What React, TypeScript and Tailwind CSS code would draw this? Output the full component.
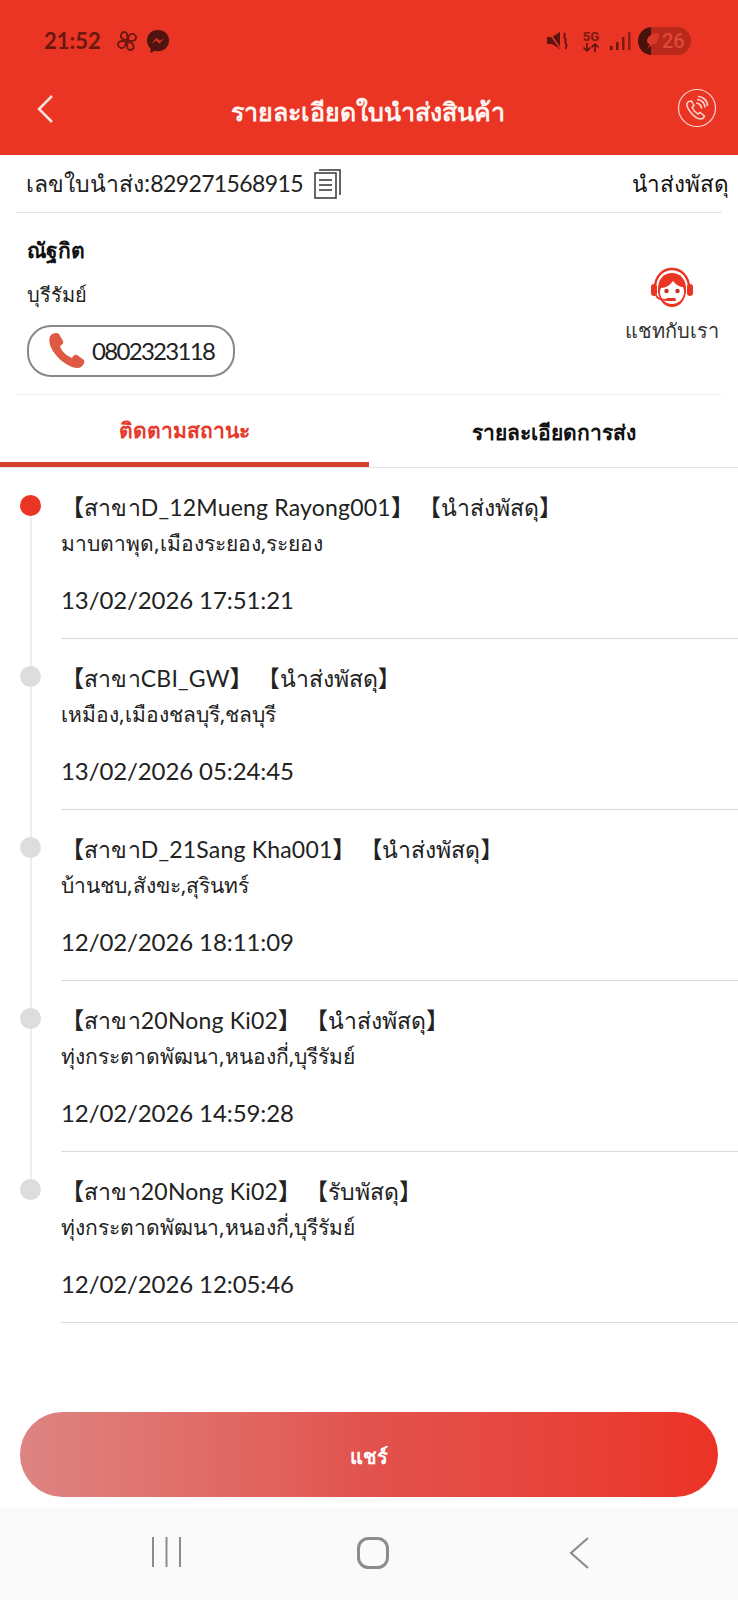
import React from "react";

const font = { fontFamily: '"Noto Sans", "DejaVu Sans", "Noto Sans CJK SC", sans-serif' };

type Item = { title: string; status: string; addr: string; time: string; active?: boolean };
const items: Item[] = [
  { title: "สาขาD_12Mueng Rayong001", status: "นำส่งพัสดุ", addr: "มาบตาพุด,เมืองระยอง,ระยอง", time: "13/02/2026 17:51:21", active: true },
  { title: "สาขาCBI_GW", status: "นำส่งพัสดุ", addr: "เหมือง,เมืองชลบุรี,ชลบุรี", time: "13/02/2026 05:24:45" },
  { title: "สาขาD_21Sang Kha001", status: "นำส่งพัสดุ", addr: "บ้านชบ,สังขะ,สุรินทร์", time: "12/02/2026 18:11:09" },
  { title: "สาขา20Nong Ki02", status: "นำส่งพัสดุ", addr: "ทุ่งกระตาดพัฒนา,หนองกี่,บุรีรัมย์", time: "12/02/2026 14:59:28" },
  { title: "สาขา20Nong Ki02", status: "รับพัสดุ", addr: "ทุ่งกระตาดพัฒนา,หนองกี่,บุรีรัมย์", time: "12/02/2026 12:05:46" },
];

function StatusBar() {
  return (
    <div className="flex h-[56px] items-end justify-between pl-[44px] pr-[47px] pb-[1px] text-[#6a1810]">
      <div className="flex items-center">
        <span className="text-[22px] font-bold leading-[28px] font-['Lato']">21:52</span>
        <svg width="26" height="26" viewBox="0 0 26 26" fill="none" stroke="currentColor" strokeWidth="1.800" className="ml-[13px]">
          <path d="M13 12C9 12 6 10 7 6.500C8 3.500 12 3 13 6C14 8 13.500 10 13 12Z" />
          <path d="M14 12C14 8 16 5 19.500 6C22.500 7 23 11 20 12.500C18 13.500 16 13 14 12Z" />
          <path d="M13.500 14C17.500 14 20 16 19.500 19.500C19 22.500 14.500 23 13.500 20C13 18 13 16 13.500 14Z" />
          <path d="M12 13.500C12 17.500 10 20.500 6.500 20C3.500 19 3 15 6 13.500C8 12.500 10 13 12 13.500Z" />
        </svg>
        <svg width="24" height="25" viewBox="0 0 24 25" className="ml-[6px]">
          <path d="M12 1C5.500 1 1 5.500 1 11.500c0 3.300 1.400 6 3.600 8V24l4-2.200c1 .3 2.200.4 3.400.4 6.500 0 11-4.700 11-10.700S18.500 1 12 1z" fill="#4f140d" />
          <path d="M5.500 14.500l5-5.500 3.300 3 4.700-3-5 5.500-3.300-3z" fill="#ea3424" />
        </svg>
      </div>
      <div className="flex items-center">
        <svg width="22" height="20" viewBox="0 0 22 20" className="mr-[12px]">
          <path d="M0 6h5l8-5v17l-8-5H0z" fill="#5c150e" />
          <path d="M1 0l12 17" stroke="#ea3424" strokeWidth="1.500" />
          <path d="M17 2c2.500 2-1.500 3 1 5.500s-1.500 3 1 5.500-1.500 2.500 0 5" fill="none" stroke="#5c150e" strokeWidth="1.800" />
        </svg>
        <div className="mr-[9px] flex w-[20px] flex-col items-center leading-none">
          <span className="text-[13px] font-bold leading-[13px] text-[#7a1b12] font-['Roboto']">5G</span>
          <svg width="18" height="9" viewBox="0 0 18 9" fill="none" stroke="#5c150e" strokeWidth="1.600">
            <path d="M5 0v8M1.500 4.500L5 8l3.500-3.500M13 9V1M9.500 4.500L13 1l3.500 3.500" />
          </svg>
        </div>
        <svg width="21" height="20" viewBox="0 0 21 20" className="mr-[7px]">
          <rect x="0" y="15" width="2.500" height="4" fill="#5c150e" />
          <rect x="6" y="11" width="2.500" height="8" fill="#6a1810" />
          <rect x="12" y="6" width="2.500" height="13" fill="#7a1b12" />
          <rect x="18" y="1" width="2.500" height="18" fill="#8a2015" />
        </svg>
        <div className="flex h-[28px] w-[53px] overflow-hidden rounded-full bg-[#b8281b]">
          <div className="h-full w-[13px] rounded-l-full bg-[#4a120c]" />
          <svg width="17" height="20" viewBox="0 0 17 20" fill="#d8392b" className="-ml-[7px] mt-[4px] shrink-0">
            <path d="M15 2C9 2 3 5 3 10c0 2 1 3 3 3l-3 5c3-3 5-4 6-5 4 0 6-5 6-11z" />
          </svg>
          <span className="pl-[1px] text-[20px] font-medium leading-[28px] text-[#e0493a] font-['Roboto']">26</span>
        </div>
      </div>
    </div>
  );
}

function Header() {
  return (
    <div className="flex flex-1 items-start justify-between pl-[36px] pr-[21px] pt-[32px]">
      <svg width="18" height="28" viewBox="0 0 18 28" fill="none" stroke="#fbe3df" strokeWidth="2.500" className="mt-[7px]">
        <path d="M16 1L3 14l13 13" />
      </svg>
      <span className="mt-[5px] ml-[4px] text-[25px] font-bold leading-[36px] text-[#fff6f3]">รายละเอียดใบนำส่งสินค้า</span>
      <svg width="40" height="40" viewBox="0 0 40 40" fill="none" stroke="#fbd5cd" strokeWidth="1.200">
        <circle cx="20" cy="20" r="18.500" />
        <path d="M10.500 14.500c-1.500 2-.5 5 2.500 9s7 7.500 10.500 7.500c2 0 3.500-1.500 4-3l-4.500-3.500-2 1.500c-2-1-4.500-3.500-6-6.500l2-2-2.500-4.500c-2 0-3.300.5-4 1.500z" strokeWidth="1.500" />
        <path d="M19 15c3 0 5.500 2.500 5.500 5.500M20 11.500c4.500 0 8 3.500 8 8M21 8.500c5 0 9.500 4 9.500 9.500" strokeWidth="1.700" />
      </svg>
    </div>
  );
}

function TimelineRow({ item, first, last }: { item: Item; first: boolean; last: boolean }) {
  return (
    <div className="flex h-[171px]">
      <div className="flex w-[61px] shrink-0 flex-col pl-[20px]">
        <div className={`ml-[10px] h-[27px] w-[2px] ${first ? "bg-transparent" : "bg-[#eeeeee]"}`} />
        <div className={`h-[21px] w-[21px] rounded-full ${item.active ? "bg-[#ea3424]" : "bg-[#dddddd]"}`} />
        <div className={`ml-[10px] w-[2px] flex-1 ${last ? "bg-transparent" : "bg-[#eeeeee]"}`} />
      </div>
      <div className="flex-1 border-b border-[#d9d9d9] pt-[21px]">
        <div className="flex h-[36px] items-center whitespace-pre text-[23px] text-[#222222]">
          <span className="font-bold">{"【"}</span>
          <span className="font-['Lato'] tracking-[0.2px]">{item.title}</span>
          <span className="font-bold">{"】"}</span>
          <span className="ml-[4px] font-medium">{"【"}{item.status}{"】"}</span>
        </div>
        <div className="h-[36px] text-[21px] leading-[36px] text-[#222222]">{item.addr}</div>
        <div className="mt-[21px] text-[24px] leading-[36px] text-[#222222] font-['Lato'] tracking-[-0.1px]">{item.time}</div>
      </div>
    </div>
  );
}

export default function App() {
  return (
    <div className="flex h-[1600px] w-[738px] flex-col overflow-hidden bg-white" style={font}>
      <div className="flex h-[155px] flex-col bg-[#ea3424]">
        <StatusBar />
        <Header />
      </div>

      <div className="mx-[16px] flex h-[58px] items-center justify-between border-b border-[#e5e5e5] pl-[10px]">
        <div className="flex items-center gap-[11px]">
          <span className="text-[23px] text-[#222222]">
            เลขใบนำส่ง:<span className="font-['Lato'] tracking-[-0.6px]">829271568915</span>
          </span>
          <svg width="27" height="30" viewBox="0 0 27 30" fill="none" stroke="#333" strokeWidth="1.500">
            <rect x="1" y="4" width="21" height="25" />
            <path d="M5 1h21v25M5 11h13M5 16h13M5 21h13" />
          </svg>
        </div>
        <span className="-mr-[7px] text-[22.500px] font-medium text-[#111111]">นำส่งพัสดุ</span>
      </div>

      <div className="mx-[16px] flex h-[182px] justify-between border-b border-[#efefef] pl-[11px]">
        <div className="flex flex-col">
          <span className="mt-[21px] text-[21px] font-semibold leading-[32px] text-[#111111]">ณัฐกิต</span>
          <span className="mt-[13px] text-[20px] font-medium leading-[32px] text-[#222222]">บุรีรัมย์</span>
          <div className="mt-[14px] flex h-[52px] w-[208px] items-center rounded-[24px] border-2 border-[#888888] pl-[19px]">
            <svg width="40" height="38" viewBox="0 0 40 38" fill="#de5a43">
              <path d="M3 3c2-2 6-3 8-1l4 7c1 2-1 4-3 5 1 5 7 10 12 12 1-2 3-4 5-3l7 5c1 2 0 5-3 7-3 2-8 1-13-2C12 29 5 21 2 13 1 9 1 5 3 3z" />
            </svg>
            <span className="ml-[4px] text-[24px] leading-none text-[#222222] font-['Lato'] tracking-[-1.700px]">0802323118</span>
          </div>
        </div>
        <div className="flex w-[100px] flex-col items-center pt-[54px]">
          <svg width="46" height="42" viewBox="0 0 46 42">
            <path d="M6 21C6 9 14 2 23 2s17 7 17 19" fill="none" stroke="#ea3424" strokeWidth="2.500" />
            <rect x="2" y="17" width="6" height="12" rx="3" fill="#ea3424" />
            <rect x="38" y="17" width="6" height="12" rx="3" fill="#ea3424" />
            <path d="M9 25C8 12 15 6 23 6s15 6 14 19c-1 9-7 15-14 15S10 34 9 25z" fill="#ea3424" />
            <path d="M24 14c3 4 7 6 10 6 1 2 1 4 1 6-1 7-6 11-12 11S12 33 11 26c0-2 0-3 1-5 5 0 9-3 12-7z" fill="#fff" />
            <circle cx="17.500" cy="24" r="2.200" fill="#c9301f" />
            <circle cx="28.500" cy="24" r="2.200" fill="#c9301f" />
            <path d="M7 28c1 4 6 5 11 5" stroke="#ea3424" strokeWidth="1.800" fill="none" />
            <rect x="17" y="31" width="10" height="3" rx="1.500" fill="#ea3424" />
          </svg>
          <span className="mt-[6px] text-[20px] leading-[32px] text-[#333333]">แชทกับเรา</span>
        </div>
      </div>

      <div className="flex h-[73px] border-b border-[#e5e5e5]">
        <div className="flex flex-1 items-center justify-center border-b-[5px] border-[#d6402f] pt-[4px] text-[21px] font-bold text-[#e63a2c]">
          ติดตามสถานะ
        </div>
        <div className="flex flex-1 items-center justify-center pt-[4px] text-[21px] font-bold text-[#111111]">
          รายละเอียดการส่ง
        </div>
      </div>

      <div className="flex flex-col">
        {items.map((it, i) => (
          <TimelineRow key={i} item={it} first={i === 0} last={i === items.length - 1} />
        ))}
      </div>

      <div className="flex-1 px-[20px] pt-[89px]">
        <div className="flex h-[85px] items-center justify-center rounded-full bg-gradient-to-r from-[#dd8482] via-[#e2524e] to-[#ec3224] pt-[4px] text-[20px] font-semibold text-white">
          แชร์
        </div>
      </div>

      <div className="flex h-[92px] items-start bg-[#fafafa] pl-[152px] pt-[29px]">
        <svg width="30" height="30" viewBox="0 0 30 30" stroke="#8a8d8f" strokeWidth="2" fill="none">
          <path d="M1 0v30M14.500 0v30M28 0v30" />
        </svg>
        <svg width="32" height="32" viewBox="0 0 32 32" fill="none" stroke="#8a8d8f" strokeWidth="3" className="ml-[175px]">
          <rect x="1.500" y="1.500" width="29" height="29" rx="10" />
        </svg>
        <svg width="21" height="32" viewBox="0 0 21 32" fill="none" stroke="#8a8d8f" strokeWidth="2.200" className="ml-[180px]">
          <path d="M19 1L2 16l17 15" />
        </svg>
      </div>
    </div>
  );
}
